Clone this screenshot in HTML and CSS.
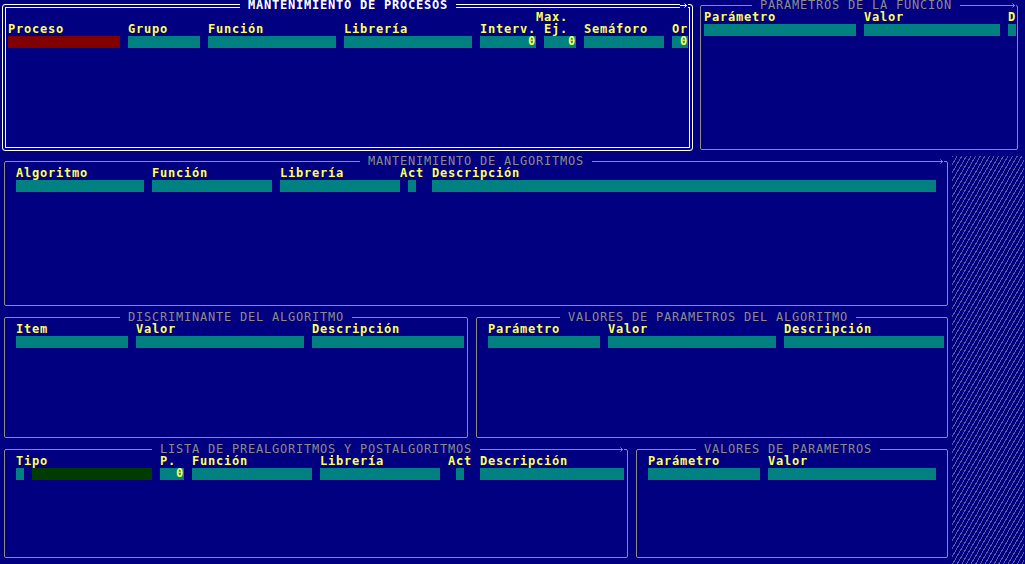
FILE: index.html
```html
<!DOCTYPE html>
<html lang="es">
<head>
<meta charset="utf-8">
<title>Mantenimiento de procesos</title>
<link rel="stylesheet" href="styles.css">
</head>
<body>
<div class="screen">

  <section class="win dbl w-proc">
    <div class="body">
      <div class="titlebar"><span class="title">MANTENIMIENTO DE PROCESOS</span><svg class="arrow" viewBox="0 0 8 12" width="8" height="12"><path d="M0 5.5H7M4.5 3.5L6.5 5.5L4.5 7.5" /></svg></div>
      <div class="row cols-proc"><span class="lbl max">Max.</span></div>
      <div class="row cols-proc">
        <span class="lbl">Proceso</span><span class="lbl">Grupo</span><span class="lbl">Función</span><span class="lbl">Librería</span><span class="lbl">Interv.</span><span class="lbl">Ej.</span><span class="lbl">Semáforo</span><span class="lbl">Or</span>
      </div>
      <div class="row cols-proc">
        <span class="fld red"></span><span class="fld"></span><span class="fld"></span><span class="fld"></span><span class="fld num">0</span><span class="fld num">0</span><span class="fld"></span><span class="fld num">0</span>
      </div>
    </div>
  </section>

  <section class="win w-func">
    <div class="body">
      <div class="titlebar"><span class="title">PARAMETROS DE LA FUNCIÓN</span><svg class="arrow" viewBox="0 0 8 12" width="8" height="12"><path d="M0 5.5H7M4.5 3.5L6.5 5.5L4.5 7.5" /></svg></div>
      <div class="row cols-func">
        <span class="lbl">Parámetro</span><span class="lbl">Valor</span><span class="lbl">D</span>
      </div>
      <div class="row cols-func">
        <span class="fld"></span><span class="fld"></span><span class="fld"></span>
      </div>
    </div>
  </section>

  <section class="win w-alg">
    <div class="body">
      <div class="titlebar"><span class="title">MANTENIMIENTO DE ALGORITMOS</span><svg class="arrow" viewBox="0 0 8 12" width="8" height="12"><path d="M0 5.5H7M4.5 3.5L6.5 5.5L4.5 7.5" /></svg></div>
      <div class="row cols-alg">
        <span class="lbl">Algoritmo</span><span class="lbl">Función</span><span class="lbl">Librería</span><span class="lbl act-h">Act</span><span class="lbl">Descripción</span>
      </div>
      <div class="row cols-alg">
        <span class="fld"></span><span class="fld"></span><span class="fld"></span><span class="fld act-f"></span><span class="fld"></span>
      </div>
    </div>
  </section>

  <div class="hatch"></div>

  <section class="win w-disc">
    <div class="body">
      <div class="titlebar"><span class="title">DISCRIMINANTE DEL ALGORITMO</span></div>
      <div class="row cols-disc">
        <span class="lbl">Item</span><span class="lbl">Valor</span><span class="lbl">Descripción</span>
      </div>
      <div class="row cols-disc">
        <span class="fld"></span><span class="fld"></span><span class="fld"></span>
      </div>
    </div>
  </section>

  <section class="win w-valalg">
    <div class="body">
      <div class="titlebar"><span class="title">VALORES DE PARAMETROS DEL ALGORITMO</span></div>
      <div class="row cols-valalg">
        <span class="lbl">Parámetro</span><span class="lbl">Valor</span><span class="lbl">Descripción</span>
      </div>
      <div class="row cols-valalg">
        <span class="fld"></span><span class="fld"></span><span class="fld"></span>
      </div>
    </div>
  </section>

  <section class="win w-lista">
    <div class="body">
      <div class="titlebar"><span class="title">LISTA DE PREALGORITMOS Y POSTALGORITMOS</span><svg class="arrow" viewBox="0 0 8 12" width="8" height="12"><path d="M0 5.5H7M4.5 3.5L6.5 5.5L4.5 7.5" /></svg></div>
      <div class="row cols-lista">
        <span class="lbl">Tipo</span><span></span><span class="lbl">P.</span><span class="lbl">Función</span><span class="lbl">Librería</span><span class="lbl">Act</span><span class="lbl">Descripción</span>
      </div>
      <div class="row cols-lista">
        <span class="fld"></span><span class="fld green"></span><span class="fld num">0</span><span class="fld"></span><span class="fld"></span><span class="fld act-f"></span><span class="fld"></span>
      </div>
    </div>
  </section>

  <section class="win w-val">
    <div class="body">
      <div class="titlebar"><span class="title">VALORES DE PARAMETROS</span></div>
      <div class="row cols-val">
        <span class="lbl">Parámetro</span><span class="lbl">Valor</span>
      </div>
      <div class="row cols-val">
        <span class="fld"></span><span class="fld"></span>
      </div>
    </div>
  </section>

</div>
</body>
</html>
```

FILE: styles.css
```css
html, body {
  margin: 0;
  padding: 0;
  background: #000080;
}

body {
  font-family: "DejaVu Sans Mono", "Liberation Mono", monospace;
  font-size: 12px;
  letter-spacing: 0.776px;
  line-height: 10px;
  color: #8c8c8c;
}

.screen {
  display: grid;
  grid-template-columns: repeat(128, 8px);
  grid-template-rows: repeat(47, 12px);
  width: 1025px;
  height: 564px;
  overflow: hidden;
}

/* window frames */
.win {
  margin: 5px 4px 6px 4px;
  border: 1px solid #8c8c8c;
  border-radius: 2px;
  min-width: 0;
  min-height: 0;
  color: #8c8c8c;
}

.win > .body {
  margin: -6px -5px -7px -5px;
}

.win.dbl {
  margin: 4px 3px 5px 2px;
  border-color: #ffffff;
  border-radius: 3px;
  box-shadow: inset 0 0 0 2px #000080, inset 0 0 0 3px #ffffff;
  color: #ffffff;
}

.win.dbl > .body {
  margin: -5px -4px -6px -3px;
}

/* window placement on the 128x47 text screen */
.w-proc   { grid-column: 1 / 88;   grid-row: 1 / 14; }
.w-func   { grid-column: 88 / 129; grid-row: 1 / 14; margin-right: 6px; }
.w-func > .body { margin-right: -7px; }
.w-alg    { grid-column: 1 / 120;  grid-row: 14 / 27; }
.w-disc   { grid-column: 1 / 60;   grid-row: 27 / 38; }
.w-valalg { grid-column: 60 / 120; grid-row: 27 / 38; }
.w-lista  { grid-column: 1 / 80;   grid-row: 38 / 48; }
.w-val    { grid-column: 80 / 120; grid-row: 38 / 48; }

.hatch {
  grid-column: 120 / 129;
  grid-row: 14 / 48;
  background-color: #000080;
  background-image:
    repeating-linear-gradient(120deg, #5858a4 0 1px, transparent 1px 4px),
    repeating-linear-gradient(0deg, transparent 0 1px, rgba(0, 0, 128, 0.45) 1px 2px);
}

/* title bars */
.titlebar {
  display: flex;
  height: 12px;
}

.title {
  background: #000080;
  padding: 0 8px;
  color: #8c8c8c;
  white-space: pre;
}

.arrow {
  display: block;
  flex: none;
  margin-left: auto;
  margin-right: 8px;
  width: 8px;
  height: 12px;
  background: #000080;
  fill: none;
  stroke: currentColor;
  stroke-width: 1;
}

.w-proc .title  { margin-left: 240px; color: #ffffff; font-weight: bold; }
.w-func .title  { margin-left: 56px; }
.w-alg .title   { margin-left: 360px; }
.w-disc .title  { margin-left: 120px; }
.w-valalg .title { margin-left: 88px; }
.w-lista .title { margin-left: 152px; }
.w-val .title   { margin-left: 64px; }

/* rows of labels / fields */
.row {
  display: grid;
  grid-auto-rows: 12px;
  height: 12px;
  column-gap: 8px;
}

.lbl {
  color: #ffff55;
  font-weight: bold;
  white-space: pre;
}

.fld {
  height: 12px;
  background: #008080;
}

.fld.num {
  color: #ffff55;
  font-weight: bold;
  text-align: right;
}

.fld.red   { background: #800000; }
.fld.green { background: #003c00; }

.cols-proc   { padding-left: 8px;  grid-template-columns: 112px 72px 128px 128px 56px 32px 80px 16px; }
.cols-proc .max { grid-column: 6; margin-left: -8px; }
.cols-func   { padding-left: 8px;  grid-template-columns: 152px 136px 8px; }
.cols-alg    { padding-left: 16px; grid-template-columns: 128px 120px 120px 16px 504px; }
.cols-alg .act-h { margin-left: -8px; }
.cols-alg .act-f { width: 8px; }
.cols-disc   { padding-left: 16px; grid-template-columns: 112px 168px 152px; }
.cols-valalg { padding-left: 16px; grid-template-columns: 112px 168px 160px; }
.cols-lista  { padding-left: 16px; grid-template-columns: 8px 120px 24px 120px 120px 24px 144px; }
.cols-lista .act-f { width: 8px; margin-left: 8px; }
.cols-val    { padding-left: 16px; grid-template-columns: 112px 168px; }
```
